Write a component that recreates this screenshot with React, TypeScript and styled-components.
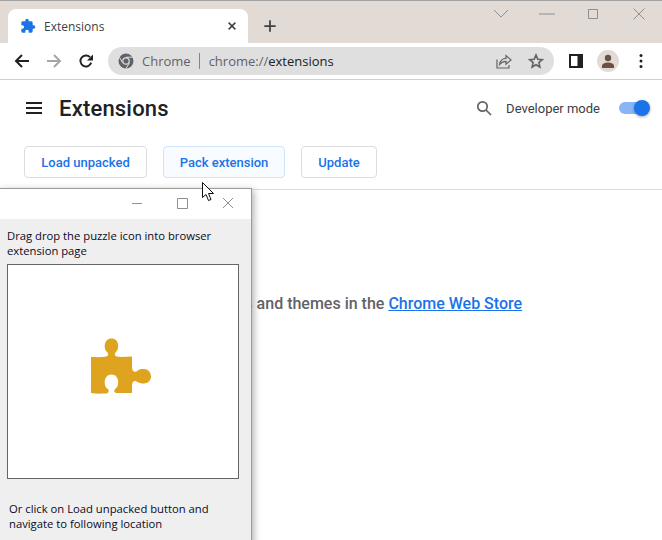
import React, { FC } from "react";
import styled, { createGlobalStyle } from "styled-components";

const GlobalStyle = createGlobalStyle`
  html, body {
    margin: 0;
    padding: 0;
    background: #fff;
    overflow: hidden;
  }
  body {
    font-family: Roboto, "Liberation Sans", sans-serif;
  }
`;

const Page = styled.div`
  position: relative;
  width: 662px;
  height: 540px;
  overflow: hidden;
  background: #fff;
`;

const TabStrip = styled.div`
  display: flex;
  align-items: flex-end;
  height: 42px;
  padding-left: 8px;
  background: #e2dad5;
  border-top: 1px solid #a3a3a3;
`;

const Tab = styled.div`
  position: relative;
  display: flex;
  align-items: center;
  width: 240px;
  height: 34px;
  box-sizing: border-box;
  padding: 0 10px 0 12px;
  background: #fff;
  border-radius: 8px 8px 0 0;
  font-family: "Open Sans", sans-serif;
  font-size: 12px;
  color: #3c4043;
`;

const TabTitle = styled.span`
  flex: 1;
  margin-left: 8px;
`;

const NewTab = styled.div`
  display: flex;
  margin: 0 0 10px 15px;
`;

const WindowControls = styled.div`
  display: flex;
  align-items: center;
  gap: 30px;
  margin: 0 15px 21px auto;
`;

const Toolbar = styled.div`
  display: flex;
  align-items: center;
  height: 36px;
  box-sizing: content-box;
  padding-left: 14px;
  background: #fff;
  border-bottom: 1px solid #d0d0d0;
`;

const NavButtons = styled.div`
  display: flex;
  gap: 16px;
  margin-right: 14px;
`;

const Omnibox = styled.div`
  display: flex;
  align-items: center;
  width: 446px;
  height: 28px;
  box-sizing: border-box;
  padding: 0 10px;
  border-radius: 14px;
  background: #dfdfdf;
  font-family: "Open Sans", sans-serif;
  font-size: 13px;
`;

const Origin = styled.span`
  margin-left: 8px;
  color: #5f6368;
`;

const Divider = styled.span`
  width: 1px;
  height: 16px;
  margin: 0 9px 0 8px;
  background: #80868b;
`;

const Url = styled.span`
  flex: 1;
  color: #5f6368;
`;

const UrlPath = styled.span`
  color: #202124;
`;

const OmniActions = styled.div`
  display: flex;
  align-items: center;
  gap: 16px;
`;

const ToolbarEnd = styled.div`
  display: flex;
  align-items: center;
  margin-left: 15px;
`;

const Avatar = styled.div`
  display: flex;
  align-items: center;
  justify-content: center;
  width: 22px;
  height: 22px;
  margin: 0 14px 0 14px;
  border-radius: 50%;
  background: #e2dad5;
`;

const Header = styled.header`
  display: flex;
  align-items: center;
  height: 56px;
  padding: 0 12px 0 26px;
`;

const Title = styled.h1`
  flex: 1;
  margin: 0 0 0 17px;
  font-size: 22px;
  font-weight: 500;
  letter-spacing: 0.2px;
  color: #202124;
`;

const DevLabel = styled.span`
  margin: 0 19px 0 14px;
  font-size: 13px;
  color: #3c4043;
`;

const Toggle = styled.div`
  position: relative;
  width: 28px;
  height: 12px;
  margin-right: 3px;
  border-radius: 6px;
  background: #8ab4f8;
`;

const Thumb = styled.div`
  position: absolute;
  top: -2px;
  right: -3px;
  width: 16px;
  height: 16px;
  border-radius: 50%;
  background: #1a73e8;
  box-shadow: 0 1px 3px rgba(0, 0, 0, 0.35);
`;

const Actions = styled.div`
  display: flex;
  gap: 16px;
  height: 54px;
  box-sizing: border-box;
  padding: 10px 24px 0;
  border-bottom: 1px solid #dadce0;
`;

const ActionButton = styled.div<{ $width: number; $hovered?: boolean }>`
  display: flex;
  align-items: center;
  justify-content: center;
  width: ${(p) => p.$width}px;
  height: 32px;
  box-sizing: border-box;
  border: 1px solid ${(p) => (p.$hovered ? "#d2e3fc" : "#dadce0")};
  border-radius: 4px;
  background: ${(p) => (p.$hovered ? "#f8fbff" : "#fff")};
  color: #1a73e8;
  font-size: 13px;
  font-weight: 500;
`;

const Empty = styled.div`
  padding-top: 104px;
  text-align: center;
  font-size: 16px;
  font-weight: 500;
  line-height: 20px;
  color: #5f6368;
`;

const StoreLink = styled.a`
  color: #1a73e8;
  text-decoration: underline;
`;

const Dialog = styled.div`
  position: absolute;
  left: -2px;
  top: 188px;
  bottom: -10px;
  width: 252px;
  border: 1px solid #9a9a9a;
  background: #efefef;
  box-shadow: 2px 2px 7px rgba(0, 0, 0, 0.3);
  font-family: "Open Sans", sans-serif;
  font-size: 11.25px;
  line-height: 15px;
  color: #0a0a1e;
`;

const DialogBar = styled.div`
  display: flex;
  align-items: center;
  justify-content: flex-end;
  gap: 30px;
  height: 30px;
  padding-right: 15px;
  background: #fff;
`;

const DialogText = styled.p`
  margin: 0;
  padding: 9px 8px 0;
`;

const DropZone = styled.div`
  display: flex;
  align-items: center;
  justify-content: center;
  width: 232px;
  height: 215px;
  margin: 6px 0 0 8px;
  box-sizing: border-box;
  padding: 0 4px 10px 0;
  border: 1px solid #666;
  background: #fff;
`;

const DialogHint = styled.p`
  margin: 0;
  padding: 22px 10px 0;
`;

const Cursor = styled.svg`
  position: absolute;
  left: 202px;
  top: 182px;
`;

const Strip: FC<{ d: string; stroke: string; size?: number; width?: number }> = ({ d, stroke, size = 16, width = 2 }) => (
  <svg width={size} height={size} viewBox="0 0 16 16" fill="none" stroke={stroke} strokeWidth={width}>
    <path d={d} />
  </svg>
);

const PuzzleIcon = () => (
  <svg width="16" height="16" viewBox="0 0 24 24" fill="#1a73e8">
    <path d="M20.5 11H19V7a2 2 0 0 0-2-2h-4V3.5a2.5 2.5 0 0 0-5 0V5H4a2 2 0 0 0-2 2v3.8h1.5a2.7 2.7 0 0 1 0 5.4H2V20a2 2 0 0 0 2 2h3.8v-1.5a2.7 2.7 0 0 1 5.4 0V22H17a2 2 0 0 0 2-2v-4h1.5a2.5 2.5 0 0 0 0-5z" />
  </svg>
);

const ChromeIcon = () => (
  <svg width="16" height="16" viewBox="0 0 16 16">
    <circle cx="8" cy="8" r="7.5" fill="#5f6368" />
    <circle cx="8" cy="8" r="3.8" fill="#dfdfdf" />
    <circle cx="8" cy="8" r="2.6" fill="#5f6368" />
    <path d="M8 4.2h6.6M4.7 9.9L1.4 4.2M11.3 9.9L8 15.5" stroke="#dfdfdf" strokeWidth="1" fill="none" />
  </svg>
);

const ReloadIcon = () => (
  <svg width="16" height="16" viewBox="0 0 16 16" fill="none">
    <path d="M13.2 9.6A5.5 5.5 0 1 1 12 4.2" stroke="#202124" strokeWidth="1.9" />
    <path d="M15 1.5V7.5H9z" fill="#202124" />
  </svg>
);

const ShareIcon = () => (
  <svg width="16" height="16" viewBox="0 0 16 16" fill="none" stroke="#5f6368" strokeWidth="1.2">
    <path d="M1 6.5V15h12v-3" />
    <path d="M3.6 11.5C4 7.5 7 5.3 10 5.3V2.5l5 4.4-5 4.2V8.3C7.5 8.3 5.3 9.3 3.6 11.5z" />
  </svg>
);

const StarIcon = () => (
  <svg width="16" height="16" viewBox="0 0 16 16" fill="none" stroke="#5f6368" strokeWidth="1.6">
    <path d="M8 2l1.8 4.2 4.5.4-3.4 3 1 4.4L8 11.7 4.1 14l1-4.4-3.4-3 4.5-.4z" />
  </svg>
);

const SidePanelIcon = () => (
  <svg width="14" height="14" viewBox="0 0 14 14">
    <path fillRule="evenodd" d="M0 0h14v14H0zM2 2v10h6.5V2z" fill="#202124" />
  </svg>
);

const PersonIcon = () => (
  <svg width="14" height="14" viewBox="0 0 14 14" fill="#6b5144">
    <circle cx="7" cy="4" r="3.2" />
    <path d="M1 14v-2c0-2.2 3-3.4 6-3.4s6 1.2 6 3.4v2z" />
  </svg>
);

const DotsIcon = () => (
  <svg width="16" height="16" viewBox="0 0 16 16" fill="#202124">
    <circle cx="8" cy="2.5" r="1.5" />
    <circle cx="8" cy="8" r="1.5" />
    <circle cx="8" cy="13.5" r="1.5" />
  </svg>
);

const MenuIcon = () => (
  <svg width="16" height="12" viewBox="0 0 16 12" fill="#202124">
    <path d="M0 0h16v2H0zM0 5h16v2H0zM0 10h16v2H0z" />
  </svg>
);

const SearchIcon = () => (
  <svg width="16" height="16" viewBox="0 0 16 16" fill="none" stroke="#5f6368" strokeWidth="1.7">
    <circle cx="6.5" cy="6.5" r="4.7" />
    <path d="M10 10l5 5" />
  </svg>
);

const GoldPuzzle = () => (
  <svg width="62" height="60" viewBox="0 0 62 60" fill="#dfa41f">
    <path d="M1 20C6 20 12 20.5 16 19.5C18.5 19 19 17 17 15C13.5 12 13.5 1.5 21.5 1.5C29.5 1.5 29.5 12 26 15C24 17 24.5 19 27 19.5C31 20.5 37 19.5 42 19.5L42 30C42 34 44 35.5 46.5 34.5C49 31.5 53 32 54 32C58 32 61 35.5 61 39.5C61 43.5 58 46.5 54 46.5C51 46.5 49 46 46.5 44.5C44 43 42 45 42 49L42 56L27 56C24.5 56 23.5 54 25 52C30 49.5 29.5 37.5 21.5 37.5C13.5 37.5 13 49.5 18 52C19.5 54 18.5 56.5 16 56.5C11 56.5 6 57 1 56Z" />
  </svg>
);

const App: FC = () => (
  <Page>
    <GlobalStyle />
    <TabStrip>
      <Tab>
        <PuzzleIcon />
        <TabTitle>Extensions</TabTitle>
        <Strip d="M3.5 3.5l9 9M12.5 3.5l-9 9" stroke="#3c4043" size={12} width={2} />
      </Tab>
      <NewTab>
        <Strip d="M8 1.5v13M1.5 8h13" stroke="#3c4043" size={14} width={2} />
      </NewTab>
      <WindowControls>
        <Strip d="M1 4l7 7 7-7" stroke="#8f8f8f" size={16} width={1} />
        <Strip d="M0 8h16" stroke="#8f8f8f" size={16} width={1} />
        <Strip d="M3.5 3.5h9v9h-9z" stroke="#8f8f8f" size={16} width={1} />
        <Strip d="M2.5 2.5l11 11M13.5 2.5l-11 11" stroke="#8f8f8f" size={16} width={1} />
      </WindowControls>
    </TabStrip>
    <Toolbar>
      <NavButtons>
        <Strip d="M15 8H2M8 2L2 8l6 6" stroke="#202124" />
        <Strip d="M1 8h13M8 2l6 6-6 6" stroke="#a6a6a6" />
        <ReloadIcon />
      </NavButtons>
      <Omnibox>
        <ChromeIcon />
        <Origin>Chrome</Origin>
        <Divider />
        <Url>
          chrome://<UrlPath>extensions</UrlPath>
        </Url>
        <OmniActions>
          <ShareIcon />
          <StarIcon />
        </OmniActions>
      </Omnibox>
      <ToolbarEnd>
        <SidePanelIcon />
        <Avatar>
          <PersonIcon />
        </Avatar>
        <DotsIcon />
      </ToolbarEnd>
    </Toolbar>
    <Header>
      <MenuIcon />
      <Title>Extensions</Title>
      <SearchIcon />
      <DevLabel>Developer mode</DevLabel>
      <Toggle>
        <Thumb />
      </Toggle>
    </Header>
    <Actions>
      <ActionButton $width={123}>Load unpacked</ActionButton>
      <ActionButton $width={122} $hovered>
        Pack extension
      </ActionButton>
      <ActionButton $width={76}>Update</ActionButton>
    </Actions>
    <Empty>
      Find extensions and themes in the <StoreLink>Chrome Web Store</StoreLink>
    </Empty>
    <Dialog>
      <DialogBar>
        <Strip d="M4 7.5h10" stroke="#8f8f8f" size={16} width={1} />
        <Strip d="M3.5 2.5h10v10h-10z" stroke="#8f8f8f" size={16} width={1} />
        <Strip d="M3 2l10 10M13 2L3 12" stroke="#8f8f8f" size={16} width={1} />
      </DialogBar>
      <DialogText>Drag drop the puzzle icon into browser extension page</DialogText>
      <DropZone>
        <GoldPuzzle />
      </DropZone>
      <DialogHint>Or click on Load unpacked button and navigate to following location</DialogHint>
    </Dialog>
    <Cursor width="14" height="20" viewBox="0 0 14 20">
      <path d="M0.5 0.5V15.5L4 12.5L6.5 18.5L9 17.5L6.5 11.5H11.5Z" fill="#fff" stroke="#111" strokeWidth="1" />
    </Cursor>
  </Page>
);

export default App;
